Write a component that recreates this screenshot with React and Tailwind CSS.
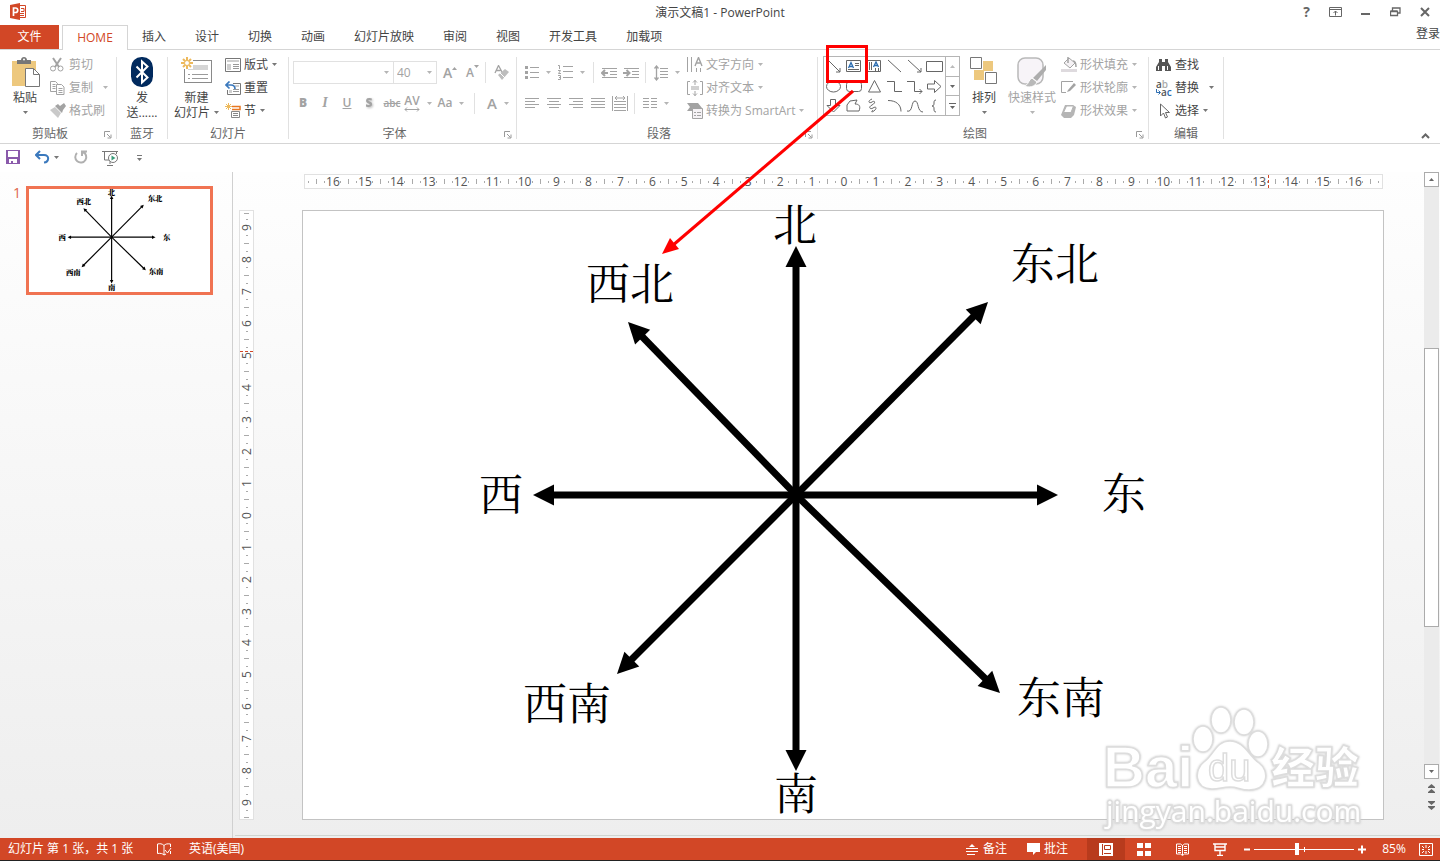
import clsx from 'clsx';

const UI_FONT = "font-['Open_Sans','Noto_Sans_CJK_SC',sans-serif]";

const Icon = ({ w = 16, h = 16, className, children }) => (
  <svg
    width={w}
    height={h}
    viewBox={`0 0 ${w} ${h}`}
    fill="none"
    stroke="currentColor"
    className={clsx('shrink-0', className)}
    aria-hidden="true"
  >
    {children}
  </svg>
);

const Caret = ({ className }) => (
  <Icon w={5} h={3} className={className}>
    <path d="M0 0h5L2.500 3z" fill="currentColor" stroke="none" />
  </Icon>
);

const Sep = () => <div className="w-px shrink-0 my-1 bg-[#e1e1e1]" />;

const SmallSep = () => <span className="w-px h-[21px] shrink-0 bg-[#e1e1e1]" />;

const Group = ({ title, launcher, className, children }) => (
  <>
    <section className={clsx('shrink-0 flex flex-col', className)} aria-label={title}>
      <div className="h-[69px] flex">{children}</div>
      <div className="h-[22px] pt-[3px] flex items-center text-[#666666]">
        <span className="flex-1 text-center">{title}</span>
        {launcher && (
          <button className="w-4 pt-0.5 flex justify-center text-[#9a9a9a]" aria-label={`${title} 设置`}>
            <Icon w={8} h={8}>
              <path d="M.5 6V.5H6M3 3l3.500 3.500M7 3.500V7H3.500" />
            </Icon>
          </button>
        )}
      </div>
    </section>
    <Sep />
  </>
);

const BigButton = ({ icon, lines, caret, disabled, className }) => (
  <button
    className={clsx(
      'shrink-0 pt-1 flex flex-col items-center leading-[15px] whitespace-nowrap',
      disabled ? 'text-[#a3a3a3]' : 'text-[#444444]',
      className
    )}
  >
    <span className="h-[33px]">{icon}</span>
    <span>{lines[0]}</span>
    <span className="h-[15px] flex items-center gap-1">
      {lines[1]}
      {caret && <Caret className={disabled ? 'text-[#b5b5b5]' : 'text-[#777777]'} />}
    </span>
  </button>
);

const RowButton = ({ icon, label, caret, disabled, className }) => (
  <button
    className={clsx(
      'h-[23px] flex items-center whitespace-nowrap',
      disabled ? 'text-[#a3a3a3]' : 'text-[#444444]',
      className
    )}
  >
    <span className="w-[19px] shrink-0 text-left">{icon}</span>
    <span>{label}</span>
    {caret && (
      <Caret className={clsx(caret === 'far' ? 'ml-2.5' : 'ml-1', disabled ? 'text-[#b5b5b5]' : 'text-[#777777]')} />
    )}
  </button>
);

/* ---------- ribbon icons ---------- */

const PasteIcon = () => (
  <Icon w={30} h={31}>
    <path d="M2 4h24v25H2z" fill="#edc87e" stroke="none" />
    <path d="M7 3h4c0-4 6-4 6 0h4v4H7z" fill="#777" stroke="none" />
    <circle cx="14" cy="2.500" r="1" fill="#fff" stroke="none" />
    <path d="M15.500 11.500h8l6 6v12h-14z" fill="#fff" stroke="#777" />
    <path d="M23.500 11.500v6h6" stroke="#777" />
  </Icon>
);

const CutIcon = () => (
  <Icon>
    <path d="M3 1l6 9M11 1L5 10" strokeWidth="2" />
    <circle cx="3" cy="11.500" r="2.500" />
    <circle cx="10.500" cy="11.500" r="2.500" />
  </Icon>
);

const CopyIcon = () => (
  <Icon>
    <path d="M6.500 11.500h-6v-10h5l2 2v1M2.500 4.500h3M2.500 6.500h3M2.500 8.500h3" />
    <path d="M6.500 4.500h5l2.500 2.500v7.500H6.500zM8.500 8.500h4M8.500 10.500h4M8.500 12.500h4" />
  </Icon>
);

const BrushIcon = () => (
  <Icon>
    <path d="M0 7l5-3 6 6-3 5z" fill="#c9c9c9" stroke="none" />
    <path d="M5 3l7 7 1-3 3-4-2-3-4 3-2-2z" fill="currentColor" stroke="none" />
  </Icon>
);

const BluetoothIcon = () => (
  <Icon w={22} h={31}>
    <rect x="0" y="0" width="22" height="30" rx="10.500" fill="#012a5e" stroke="none" />
    <path d="M5.500 9.500l11 11-5.500 5V4.500l5.500 5-11 11" stroke="#fff" strokeWidth="2" />
  </Icon>
);

const NewSlideIcon = () => (
  <Icon w={31} h={28}>
    <rect x="3.500" y="3.500" width="27" height="22" fill="#fff" stroke="#8a8a8a" />
    <path d="M7 8h20v5H7z" fill="#d5d5d5" stroke="none" />
    <path d="M7 17.500h2M11 17.500h16M7 21.500h2M11 21.500h16" stroke="#9a9a9a" />
    <path d="M0 0h12v12H0z" fill="#fff" stroke="none" />
    <path d="M6 0v12M0 6h12M2 2l8 8M10 2l-8 8" stroke="#edb95c" strokeWidth="2" />
    <circle cx="6" cy="6" r="2.500" fill="#fff" stroke="#edb95c" />
  </Icon>
);

const LayoutIcon = () => (
  <Icon h={14}>
    <path d="M.5.5h15v13H.5z" stroke="#777" />
    <path d="M2 2h12v2H2zM2 6h4v6H2z" fill="#cfcfcf" stroke="none" />
    <path d="M8 6.500h6M8 8.500h6M8 10.500h6" stroke="#999" />
  </Icon>
);

const ResetIcon = () => (
  <Icon h={14}>
    <path d="M8 2.500h7.500v11h-13V9" stroke="#777" />
    <path d="M10 4h4v2h-4zM4 9h3v3H4z" fill="#cfcfcf" stroke="none" />
    <path d="M8 8.500h6M8 10.500h6" stroke="#999" />
    <path d="M1 4h5c3 0 4 1 4 4M4.500 .5L1 4l3.500 3.500" stroke="#3b79bd" strokeWidth="1.700" />
  </Icon>
);

const SectionIcon = () => (
  <Icon h={16}>
    <path d="M3.500 0v7M0 3.500h7M1 1l5 5M6 1L1 6" stroke="#edb95c" />
    <path d="M7 3.500h8v3H7" stroke="#e87722" strokeWidth="1.500" />
    <path d="M6.500 8.500h8v6h-8zM8 10.500h5M8 12.500h5" stroke="#888" />
  </Icon>
);

const LinesIcon = ({ rows }) => (
  <Icon w={14} h={12}>
    {rows.map(([a, b], i) => (
      <path key={i} d={`M${a} ${i * 3 + 1}.5H${b}`} />
    ))}
  </Icon>
);

const BulletsIcon = () => (
  <Icon w={14} h={14}>
    <path d="M0 0h3v3H0zM0 5h3v3H0zM0 10h3v3H0z" fill="currentColor" stroke="none" />
    <path d="M5 1.500h9M5 6.500h9M5 11.500h9" />
  </Icon>
);

const NumbersIcon = () => (
  <Icon w={15} h={15}>
    <path d="M0 .5h1.500V4M0 5.500h2.500L.5 8.500H3M0 10.500h2.500v4H0M1 12.500h1.500" />
    <path d="M5 1.500h10M5 6.500h10M5 12.500h10" />
  </Icon>
);

const IndentIcon = ({ right }) => (
  <Icon w={16} h={12}>
    <path d="M1 1.500h15M9 4.500h7M9 7.500h7M1 10.500h15" />
    <path d={right ? 'M0 6h6M3.500 3L6.500 6l-3 3' : 'M1 6h6M4 3L1 6l3 3'} strokeWidth="2" />
  </Icon>
);

const SpacingIcon = () => (
  <Icon w={14} h={16}>
    <path d="M2.500 1v14M.5 3.500l2-2.500 2 2.500M.5 12.500l2 2.500 2-2.500" strokeWidth="1.300" />
    <path d="M6 3.500h8M6 6.500h8M6 9.500h8M6 12.500h8" />
  </Icon>
);

const DistributeIcon = () => (
  <Icon w={16} h={16}>
    <path d="M.5 1v15M15.500 1v15M2 6.500h12M2 9.500h12M2 12.500h12M2 15.500h12" />
    <path d="M3 3h10M5 1L3 3l2 2M11 1l2 2-2 2" />
  </Icon>
);

const ColumnsIcon = () => (
  <Icon w={14} h={12}>
    <path d="M0 1.500h6M0 4.500h6M0 7.500h6M0 10.500h6M8 1.500h6M8 4.500h6M8 7.500h6M8 10.500h6" />
  </Icon>
);

const TextDirIcon = () => (
  <Icon>
    <path d="M.5 0v15M4.500 0v15M9.500 11v4M13.500 11v4" />
    <path d="M8 9l3.500-8.500L15 9M9.500 6h4" strokeWidth="1.400" />
  </Icon>
);

const AlignTextIcon = () => (
  <Icon>
    <path d="M3 1.500H.5v13H3M13 1.500h2.500v13H13" />
    <path d="M8 0v5M6 2.500L8 .5l2 2M8 11v5M6 13.500l2 2 2-2M4 7h8M4 9h8" />
  </Icon>
);

const SmartArtIcon = () => (
  <Icon>
    <path d="M0 0h11l4 5H6v3H0l3-4z" fill="currentColor" stroke="none" />
    <path d="M5.500 5.500h10v10h-10z" fill="#f5f2f5" />
    <path d="M7 9.500h2M10 9.500h4M7 12.500h2M10 12.500h4" />
  </Icon>
);

const ArrangeIcon = () => (
  <Icon w={28} h={28}>
    <path d="M4 13h10v10H4zM13 4h10v10H13z" fill="#edc87e" stroke="none" />
    <path d="M.5.500h11v11H.5zM15.500 15.500h11v11h-11z" fill="#fff" stroke="#777" />
  </Icon>
);

const QuickStyleIcon = () => (
  <Icon w={30} h={31}>
    <rect x="1" y="1" width="25" height="26" rx="7" fill="#f7f4f8" stroke="#b9b9b9" strokeWidth="1.500" />
    <path d="M29 8v5L20 24l-4-3z" fill="#adadad" stroke="none" />
    <path d="M15 21l5 4c-2 5-8 6-13 4 5-1 4-6 8-8z" fill="#b9b9b9" stroke="#fff" />
  </Icon>
);

const FillIcon = () => (
  <Icon>
    <path d="M3 6l5-5 6 5-5 5z" fill="#f5f2f5" />
    <path d="M7 0v6M12 4c3 0 3 3 3 6" strokeWidth="1.500" />
    <path d="M0 12h16v3H0z" fill="#dedade" stroke="none" />
  </Icon>
);

const OutlineIcon = () => (
  <Icon>
    <path d="M12 1.500H.5v11H5" />
    <path d="M7 10l6-7 2 2-6 6-3 1z" fill="currentColor" stroke="none" />
  </Icon>
);

const EffectIcon = () => (
  <Icon>
    <path d="M4 2h8l3 2-2 8-3 3H3l-3-3z" fill="#b5b5b5" stroke="none" />
    <path d="M5.500 3h7L10 9.500H2.500z" fill="#fff" stroke="#b5b5b5" />
  </Icon>
);

const FindIcon = () => (
  <Icon h={14}>
    <path d="M3 1h3v3h3V1h3v3l3 5v4H9V8H6v5H0V9l3-5z" fill="#555" stroke="none" />
    <path d="M2.500 8v4M11.500 8v4" stroke="#fff" />
  </Icon>
);

const ReplaceIcon = () => (
  <span className="block h-4 w-[17px] text-[10px] leading-[8px] font-semibold text-[#555555]">
    <span className="block">
      a<span className="text-[#aaaaaa]">b</span>
    </span>
    <span className="flex">
      <Icon w={5} h={6} className="mt-px text-[#2b6cb0]">
        <path d="M.5 0v3.500H4M2.500 1.500l2 2-2 2" />
      </Icon>
      a<span className="text-[#2b6cb0]">c</span>
    </span>
  </span>
);

const SelectIcon = () => (
  <Icon>
    <path d="M4.500 1v12l3-3 2 5 2-1-2-4.500h4z" stroke="#666" />
  </Icon>
);

const ToolButton = ({ label, className, caret, children }) => (
  <button
    className={clsx('h-[22px] shrink-0 flex items-center justify-center text-[#a3a3a3]', className)}
    aria-label={label}
  >
    {children}
    {caret && <Caret className="ml-[7px] text-[#b5b5b5]" />}
  </button>
);

/* ---------- shape gallery ---------- */

const GALLERY = [
  ['直线箭头', <path d="M2 1l12 12M14 9v4h-4" />],
  [
    '文本框',
    <>
      <path d="M.5 1.500h14v11H.5z" />
      <path d="M2.500 9L5 3.500 7.500 9M3.500 7.500h3" stroke="#2b6cb0" strokeWidth="1.300" />
      <path d="M9 4.500h4M9 6.500h4M2 10.500h11" />
    </>,
  ],
  [
    '竖排文本框',
    <>
      <path d="M.5 1.500h14v11H.5z" />
      <path d="M7.500 8L10 3l2.500 5M8.500 6.500h3" stroke="#2b6cb0" strokeWidth="1.300" />
      <path d="M3.500 3v8M5.500 3v8M9.500 9v3M12.500 9v3" />
    </>,
  ],
  ['直线', <path d="M1 1l13 12" />],
  ['箭头', <path d="M1 1l13 12M14 9v4h-4" />],
  ['矩形', <path d="M-.5 2.500h16v10h-16z" />],
  ['椭圆', <ellipse cx="7.500" cy="8.500" rx="7" ry="5.500" />],
  ['圆角矩形', <rect x=".5" y="3.500" width="15" height="10" rx="3" />],
  ['三角形', <path d="M8.500 2.500l6 11.500h-12z" />],
  ['肘形连接符', <path d="M0 3.500h7.500v10H15" />],
  ['肘形箭头', <path d="M0 3.500h7.500v10H15M12.500 11l2.500 2.500-2.500 2.500" />],
  ['右箭头', <path d="M.5 6h7V2.500l6.500 6-6.500 6V11h-7z" />],
  ['下箭头', <path d="M4.500 2.500h5v6h4.500l-6.500 6.500L1 8.500h3.500z" />],
  ['任意多边形', <path d="M4 4l7-1-2 4c4 0 6 2 4 7H1V8z" />],
  ['自由曲线', <path d="M6 2c-5 2-3 5 0 3s4 1 0 3-2 5 1 3 4 0 2 2-5 3-2 0" />],
  ['弧形', <path d="M1 3.500c8 0 13 4 13 11" />],
  ['曲线', <path d="M0 14c6 2 4-10 8-10s2 11 8 11" />],
  ['左大括号', <path d="M9 3c-4 0 0 6-4 6 4 0 0 6 4 6" />],
];

const ShapeGallery = () => (
  <div className="ml-[5px] mt-[3px] w-[137px] h-[60px] shrink-0 flex border border-[#b5b5b5] bg-white">
    <div className="flex-1 grid grid-cols-6 grid-rows-3">
      {GALLERY.map(([name, shape]) => (
        <button key={name} className="flex items-center justify-center text-[#666666]" aria-label={name}>
          <Icon className="overflow-visible">{shape}</Icon>
        </button>
      ))}
    </div>
    <div className="w-[14px] flex flex-col border-l border-[#b5b5b5] divide-y divide-[#b5b5b5] text-[#666666]">
      <button className="flex-1 flex items-center justify-center text-[#bbbbbb]" aria-label="向上">
        <Caret className="rotate-180" />
      </button>
      <button className="flex-1 flex items-center justify-center" aria-label="向下">
        <Caret />
      </button>
      <button className="flex-1 flex flex-col gap-0.5 items-center justify-center" aria-label="更多">
        <span className="w-[7px] h-px bg-[#666666]" />
        <Caret />
      </button>
    </div>
  </div>
);

/* ---------- header ---------- */

const TABS = ['插入', '设计', '切换', '动画', '幻灯片放映', '审阅', '视图', '开发工具', '加载项'];

const TitleBar = () => (
  <header className="h-[25px] shrink-0 flex items-center text-[#444444]">
    <div className="flex-1 pb-0.5 pl-[10px]">
      <Icon w={17} h={17}>
        <path d="M8.500 2.500h7v12h-7z" fill="#fff" stroke="#d24726" />
        <path d="M11 5.500h3v3h-3M10 10.500h4M10 12.500h4" stroke="#d24726" />
        <path d="M0 2l10-2v17L0 15z" fill="#d24726" stroke="none" />
        <path d="M3.500 13V5h2c3 0 3 4.500 0 4.500h-2" stroke="#fff" strokeWidth="1.700" />
      </Icon>
    </div>
    <h1>演示文稿1 - PowerPoint</h1>
    <div className="flex-1 flex justify-end items-center gap-[19px] pb-0.5 pr-[10px] text-[#666666]">
      <button className="text-[14px] leading-[14px] font-bold" aria-label="帮助">?</button>
      <button aria-label="功能区显示选项">
        <Icon w={13} h={10}>
          <path d="M.5.500h12v9H.5zM1 2.500h11M6.500 8.500V4M4.500 6l2-2 2 2" />
        </Icon>
      </button>
      <button aria-label="最小化">
        <Icon w={10} h={10}>
          <path d="M0 7h9" strokeWidth="2" />
        </Icon>
      </button>
      <button aria-label="还原">
        <Icon w={11} h={10}>
          <path d="M2.500 4V1h7.500v5H8M.5 4.500H7.500v4H.5zM.5 4h7" strokeWidth="1.300" />
        </Icon>
      </button>
      <button aria-label="关闭">
        <Icon w={10} h={10}>
          <path d="M1 1l8 8M9 1L1 9" strokeWidth="2" />
        </Icon>
      </button>
    </div>
  </header>
);

const TabRow = () => (
  <nav className="h-[25px] shrink-0 flex border-b border-[#d5d5d5] text-[#444444]">
    <button className="w-[59px] bg-[#d24726] text-white">文件</button>
    <button className="ml-[3px] -mb-px w-[66px] border border-b-0 border-[#d5d5d5] bg-white text-[#d24726]">HOME</button>
    <div className="flex-1 ml-[14px] flex gap-[29px]">
      {TABS.map((tab) => (
        <button key={tab}>{tab}</button>
      ))}
    </div>
    <button className="-mt-1.5">登录</button>
  </nav>
);

const FontGroup = () => (
  <Group title="字体" launcher className="w-[227px]">
    <div className="flex-1 pt-2 pl-1 flex flex-col gap-2">
      <div className="h-[23px] flex items-center">
        <label className="w-[101px] h-full flex items-center border border-[#e1e1e1]">
          <input className="w-full min-w-0 outline-none" aria-label="字体" />
          <Caret className="mx-1 text-[#b5b5b5]" />
        </label>
        <label className="w-[43px] h-full flex items-center border border-l-0 border-[#e1e1e1]">
          <select
            className="appearance-none w-full min-w-0 pl-[3px] text-[#a3a3a3] outline-none"
            aria-label="字号"
            defaultValue="40"
          >
            <option>36</option>
            <option>40</option>
          </select>
          <Caret className="mx-1 text-[#b5b5b5]" />
        </label>
        <button className="ml-1.5 w-[15px] flex font-semibold text-[14px] text-[#a3a3a3]" aria-label="增大字号">
          A<Caret className="mt-0.5 rotate-180" />
        </button>
        <button className="ml-2 w-[15px] flex items-center font-semibold text-[#a3a3a3]" aria-label="减小字号">
          A<Caret className="mb-3" />
        </button>
        <span className="w-1" />
        <SmallSep />
        <ToolButton className="ml-2" label="清除所有格式">
          <Icon>
            <path d="M1 8L4.500 .5 8 7M2.500 5.500h4" strokeWidth="1.300" />
            <path d="M4 10l7-6 4 3-7 8z" fill="#bdbdbd" stroke="none" />
            <path d="M6 8l5 5" stroke="#fff" />
          </Icon>
        </ToolButton>
      </div>
      <div className="-ml-px flex items-center font-semibold">
        <ToolButton className="w-[22px]" label="加粗"><b>B</b></ToolButton>
        <ToolButton className="w-[22px]" label="倾斜">
          <i className="font-['Liberation_Serif',serif] text-[14px]">I</i>
        </ToolButton>
        <ToolButton className="w-[22px]" label="下划线"><u>U</u></ToolButton>
        <ToolButton className="w-[22px]" label="文字阴影">
          <b className="drop-shadow-[1px_1px_1px_#bbbbbb]">S</b>
        </ToolButton>
        <ToolButton className="w-[24px] text-[10px]" label="删除线"><s>abc</s></ToolButton>
        <ToolButton className="w-[28px]" label="字符间距" caret>
          <span className="flex flex-col items-center leading-[12px]">
            AV
            <Icon w={16} h={5}>
              <path d="M1 2.500h14M3 .5l-2 2 2 2M13 .5l2 2-2 2" />
            </Icon>
          </span>
        </ToolButton>
        <ToolButton className="w-[38px]" label="更改大小写" caret>Aa</ToolButton>
        <span className="w-1" />
        <SmallSep />
        <ToolButton className="ml-2 w-[30px] text-[15px]" label="字体颜色" caret>A</ToolButton>
      </div>
    </div>
  </Group>
);

const ParagraphGroup = () => (
  <Group title="段落" launcher className="w-[300px]">
    <div className="w-[170px] pt-2 pl-2 flex flex-col gap-2">
      <div className="h-[23px] flex items-center">
        <ToolButton label="项目符号" caret><BulletsIcon /></ToolButton>
        <ToolButton className="ml-[7px]" label="编号" caret><NumbersIcon /></ToolButton>
        <span className="w-2" />
        <SmallSep />
        <ToolButton className="ml-[7px]" label="减少缩进"><IndentIcon /></ToolButton>
        <ToolButton className="ml-1.5" label="增加缩进"><IndentIcon right /></ToolButton>
        <span className="w-1.5" />
        <SmallSep />
        <ToolButton className="ml-2" label="行距" caret><SpacingIcon /></ToolButton>
      </div>
      <div className="flex items-center">
        <ToolButton label="左对齐"><LinesIcon rows={[[0, 14], [0, 10], [0, 14], [0, 10]]} /></ToolButton>
        <ToolButton className="ml-2" label="居中"><LinesIcon rows={[[0, 14], [2, 12], [0, 14], [2, 12]]} /></ToolButton>
        <ToolButton className="ml-2" label="右对齐"><LinesIcon rows={[[0, 14], [4, 14], [0, 14], [4, 14]]} /></ToolButton>
        <ToolButton className="ml-2" label="两端对齐"><LinesIcon rows={[[0, 14], [0, 14], [0, 14], [0, 14]]} /></ToolButton>
        <ToolButton className="ml-[7px]" label="分散对齐"><DistributeIcon /></ToolButton>
        <span className="w-1.5" />
        <SmallSep />
        <ToolButton className="ml-2" label="分栏" caret><ColumnsIcon /></ToolButton>
      </div>
    </div>
    <div className="flex flex-col items-start">
      <RowButton icon={<TextDirIcon />} label="文字方向" caret disabled />
      <RowButton icon={<AlignTextIcon />} label="对齐文本" caret disabled />
      <RowButton icon={<SmartArtIcon />} label="转换为 SmartArt" caret disabled />
    </div>
  </Group>
);

const Ribbon = () => (
  <div className="h-[94px] shrink-0 pt-[3px] flex border-b border-[#d5d5d5] overflow-hidden">
    <Group title="剪贴板" launcher className="w-[116px]">
      <BigButton className="w-[50px]" icon={<PasteIcon />} lines={['粘贴']} caret />
      <div>
        <RowButton icon={<CutIcon />} label="剪切" disabled />
        <RowButton icon={<CopyIcon />} label="复制" caret="far" disabled />
        <RowButton icon={<BrushIcon />} label="格式刷" disabled />
      </div>
    </Group>
    <Group title="蓝牙" className="w-[50px]">
      <BigButton className="w-[50px]" icon={<BluetoothIcon />} lines={['发', '送......']} />
    </Group>
    <Group title="幻灯片" className="w-[120px]">
      <BigButton className="w-[57px]" icon={<NewSlideIcon />} lines={['新建', '幻灯片']} caret />
      <div>
        <RowButton icon={<LayoutIcon />} label="版式" caret />
        <RowButton icon={<ResetIcon />} label="重置" />
        <RowButton icon={<SectionIcon />} label="节" caret />
      </div>
    </Group>
    <FontGroup />
    <ParagraphGroup />
    <Group title="绘图" launcher className="w-[330px]">
      <ShapeGallery />
      <BigButton className="w-[48px]" icon={<ArrangeIcon />} lines={['排列']} caret />
      <BigButton className="w-[48px]" icon={<QuickStyleIcon />} lines={['快速样式']} caret disabled />
      <div className="ml-[5px]">
        <RowButton icon={<FillIcon />} label="形状填充" caret disabled />
        <RowButton icon={<OutlineIcon />} label="形状轮廓" caret disabled />
        <RowButton icon={<EffectIcon />} label="形状效果" caret disabled />
      </div>
    </Group>
    <Group title="编辑" className="w-[74px]">
      <div className="ml-[7px]">
        <RowButton icon={<FindIcon />} label="查找" />
        <RowButton icon={<ReplaceIcon />} label="替换" caret="far" />
        <RowButton icon={<SelectIcon />} label="选择" caret />
      </div>
    </Group>
    <div className="flex-1 flex items-end justify-end pr-[10px] pb-1">
      <button className="text-[#666666]" aria-label="折叠功能区">
        <Icon w={9} h={6}>
          <path d="M1 5l3.500-3.500L8 5" strokeWidth="2" />
        </Icon>
      </button>
    </div>
  </div>
);

const QuickAccess = () => (
  <div className="h-7 shrink-0 pl-1.5 flex items-center text-[#777777]">
    <button className="mb-0.5" aria-label="保存">
      <Icon w={14} h={14}>
        <path d="M0 0h14v14H0z" fill="#8a5aab" stroke="none" />
        <path d="M2 1h10v6H2zM3 9h8v4H7v-2H5v2H3z" fill="#fff" stroke="none" />
      </Icon>
    </button>
    <button className="ml-[15px] mb-0.5 flex items-center gap-1" aria-label="撤消">
      <Icon w={15} h={14} className="text-[#3b79bd]">
        <path d="M1 5h8c6 0 5 7 0 7.500M5 1L1 5l4 4" strokeWidth="2" />
      </Icon>
      <Caret />
    </button>
    <button className="ml-[15px] mb-0.5" aria-label="重复">
      <Icon w={14} h={14} className="text-[#b0b0b0]">
        <path d="M9 2a5.500 5.500 0 1 1-6 1M8 6V1.500h5" strokeWidth="2" />
      </Icon>
    </button>
    <button className="ml-[14px]" aria-label="从头开始放映">
      <Icon w={17} h={16}>
        <path d="M0 1.500h16M2.500 2v8H7M14.500 2v2M8 11v3M5 15.500h6" />
        <circle cx="11" cy="8" r="4.500" fill="#fff" />
        <path d="M9.500 5.500v5l4-2.500z" fill="#3b9c7a" stroke="none" />
      </Icon>
    </button>
    <button className="ml-[18px] flex flex-col items-center gap-0.5" aria-label="自定义快速访问工具栏">
      <span className="w-[5px] h-px bg-[#777777]" />
      <Caret />
    </button>
  </div>
);

/* ---------- slide ---------- */

const CENTER = [494, 285];

const TIPS = [
  [494, 36],
  [686, 92],
  [756, 285],
  [698, 483],
  [494, 561],
  [315, 464],
  [231, 285],
  [326, 112],
];

const LABELS = [
  ['北', 493, 15],
  ['东北', 753, 54],
  ['东', 822, 284],
  ['东南', 759, 488],
  ['南', 494, 584],
  ['西南', 265, 494],
  ['西', 199, 285],
  ['西北', 328, 74],
];

const Compass = ({ bold }) => (
  <svg viewBox="1 1 1080 608" className="w-full h-full overflow-visible" role="img" aria-label="方位图">
    {TIPS.map(([x, y]) => {
      const angle = (Math.atan2(y - CENTER[1], x - CENTER[0]) * 180) / Math.PI;
      const length = Math.hypot(x - CENTER[0], y - CENTER[1]);
      return (
        <g key={`${x}-${y}`} transform={`translate(${CENTER[0]} ${CENTER[1]}) rotate(${angle})`}>
          <path d={`M-2 0H${length - 16}`} stroke="#000" strokeWidth="7" />
          <path d={`M${length} 0l-21-10.500v21z`} />
        </g>
      );
    })}
    {LABELS.map(([text, x, y]) => (
      <text
        key={text}
        x={x}
        y={y + 16}
        textAnchor="middle"
        className={clsx(
          "text-[44px] font-['Liberation_Serif','Noto_Serif_CJK_SC','Noto_Sans_CJK_SC',serif]",
          bold ? 'font-black' : 'font-normal'
        )}
      >
        {text}
      </text>
    ))}
  </svg>
);

const rulerSlots = (quarters) => Array.from({ length: quarters * 2 + 1 }, (_, i) => i - quarters);

const HRuler = () => (
  <div className="relative ml-[71px] mr-[41px] mt-0.5 h-[15px] shrink-0 flex border border-[#e1e1e1] bg-white text-[#555555]">
    {rulerSlots(67).map((k) => (
      <span key={k} className="flex-1 basis-0 min-w-0 flex items-center justify-center leading-[13px]">
        {k % 4 === 0 ? (
          Math.abs(k / 4)
        ) : (
          <span className={clsx('w-px shrink-0 bg-[#aaaaaa]', k % 2 === 0 ? 'h-[5px]' : 'h-0.5')} />
        )}
      </span>
    ))}
    <span className="absolute inset-y-0 left-[893px] border-l border-dashed border-[#d24726] xl:left-[89.4%]" />
  </div>
);

const VRuler = () => (
  <div className="relative ml-1.5 w-[15px] shrink-0 flex flex-col border border-[#e1e1e1] bg-white text-[#555555]">
    {rulerSlots(38).map((k) => (
      <span
        key={k}
        className={clsx(
          'basis-0 min-h-0 flex items-center justify-center',
          Math.abs(k) === 38 ? 'grow-[0.6]' : 'grow'
        )}
      >
        {k % 4 === 0 ? (
          <span className="-rotate-90 leading-[13px]">{Math.abs(k / 4)}</span>
        ) : (
          <span className={clsx('h-px shrink-0 bg-[#aaaaaa]', k % 2 === 0 ? 'w-[5px]' : 'w-0.5')} />
        )}
      </span>
    ))}
    <span className="absolute inset-x-0 top-[23%] border-t border-dashed border-[#d24726]" />
  </div>
);

const DoubleArrow = ({ className }) => (
  <Icon w={7} h={9} className={className}>
    <path d="M3.500 0L7 3H0zM3.500 5L7 8H0z" fill="currentColor" stroke="none" />
    <path d="M0 3.500h7M0 8.500h7" />
  </Icon>
);

const ScrollBar = () => (
  <div className="w-4 shrink-0 flex flex-col items-start text-[#666666]">
    <button
      className="size-[15px] shrink-0 flex items-center justify-center border border-[#ababab] bg-white"
      aria-label="向上滚动"
    >
      <Caret className="rotate-180" />
    </button>
    <div className="w-[15px] flex-1 flex flex-col bg-[#ebebeb]">
      <div className="grow-[162] basis-0" />
      <div className="grow-[278] basis-0 border border-[#ababab] bg-white" />
      <div className="grow-[137] basis-0" />
    </div>
    <button
      className="size-[15px] shrink-0 flex items-center justify-center border border-[#ababab] bg-white"
      aria-label="向下滚动"
    >
      <Caret />
    </button>
    <button className="mt-[5px] ml-1" aria-label="上一张幻灯片">
      <DoubleArrow />
    </button>
    <button className="mt-2 mb-[25px] ml-1" aria-label="下一张幻灯片">
      <DoubleArrow className="rotate-180" />
    </button>
  </div>
);

const Workspace = () => (
  <main className="flex-1 min-h-0 flex bg-linear-to-b from-[#fefefe] to-[#eeeeee]">
    <aside className="w-[233px] shrink-0 pl-[13px] pt-[14px] flex items-start border-r border-[#d0d0d0]">
      <span className="w-[13px] text-[14px] leading-[14px] text-[#e0654a]">1</span>
      <button className="w-[187px] h-[109px] border-3 border-[#f07352] bg-white" aria-label="幻灯片 1">
        <Compass bold />
      </button>
    </aside>
    <div className="flex-1 min-w-0 flex flex-col">
      <div className="flex-1 min-h-0 flex">
        <div className="flex-1 min-w-0 flex flex-col">
          <HRuler />
          <div className="flex-1 min-h-0 mt-[21px] mb-[15px] flex">
            <VRuler />
            <div className="ml-12 mr-10 flex-1 min-w-0 border border-[#c3c3c3] bg-white">
              <Compass />
            </div>
          </div>
        </div>
        <ScrollBar />
      </div>
      <div className="ml-0.5 h-[3px] shrink-0 border-t border-[#d0d5d0]" />
    </div>
  </main>
);

/* ---------- status bar ---------- */

const StatusBar = () => (
  <footer className="h-[23px] shrink-0 flex items-center border-b border-[#222222] bg-[#d24726] text-white">
    <span className="w-[157px] pl-2">幻灯片 第 1 张，共 1 张</span>
    <button aria-label="拼写检查">
      <Icon w={15} h={13}>
        <path d="M7 2.500C5 .5 3 .5.5 1v9.500c3-.5 5 0 6.500 1.500zM7 2.500C8.500 1 10 .5 13.500 1v3M7 12l2-1M8 7l2.500 3L14 5M13.500 8v3" />
      </Icon>
    </button>
    <button className="ml-[17px]">英语(美国)</button>
    <div className="flex-1" />
    <button className="flex items-center gap-[5px]">
      <Icon w={12} h={12}>
        <path d="M3 4l3-3 3 3z" fill="#fff" stroke="none" />
        <path d="M0 5.500h12M0 8.500h12M1 11.500h8" />
      </Icon>
      备注
    </button>
    <button className="ml-5 flex items-center gap-1">
      <Icon w={13} h={12}>
        <path d="M0 0h13v9H9l-3 3V9H0z" fill="#fff" stroke="none" />
      </Icon>
      批注
    </button>
    <button
      className="ml-[19px] w-[38px] h-full flex items-center justify-center bg-[#b83b1d]"
      aria-label="普通视图"
    >
      <Icon w={14} h={13}>
        <path d="M0 0h14v13H0z" fill="#fff" stroke="none" />
        <path d="M3.500 1v11" stroke="#b83b1d" />
        <path d="M5.500 2.500h6v4h-6zM5 10.500h7" stroke="#b83b1d" />
      </Icon>
    </button>
    <button className="w-[38px] flex justify-center" aria-label="幻灯片浏览">
      <Icon w={14} h={13}>
        <path d="M0 0h6v5H0zM8 0h6v5H8zM0 8h6v5H0zM8 8h6v5H8z" fill="#fff" stroke="none" />
      </Icon>
    </button>
    <button className="w-[38px] flex justify-center" aria-label="阅读视图">
      <Icon w={13} h={13}>
        <path d="M6.500 2.500l-2-1.500H.5v10h4l2 1.500 2-1.500h4V1h-4zM6.500 2v10M2 3.500h3M2 5.500h3M2 7.500h3M2 9.500h3M8 3.500h3M8 5.500h3M8 7.500h3M8 9.500h3" />
      </Icon>
    </button>
    <button className="w-[38px] flex justify-center" aria-label="幻灯片放映">
      <Icon w={14} h={13}>
        <path d="M0 1h14M2 1v6.500h10V1M2 4h10M7 8v4M4 12.500h6" strokeWidth="1.400" />
      </Icon>
    </button>
    <button className="ml-1" aria-label="缩小">
      <Icon w={8} h={9}>
        <path d="M1 4.500h6" strokeWidth="2" />
      </Icon>
    </button>
    <div className="relative w-[100px] ml-[3px] flex items-center">
      <input
        type="range"
        min="0"
        max="100"
        defaultValue="43"
        aria-label="缩放"
        className="w-full h-3 appearance-none bg-transparent [&::-webkit-slider-runnable-track]:h-px [&::-webkit-slider-runnable-track]:bg-white [&::-webkit-slider-thumb]:appearance-none [&::-webkit-slider-thumb]:w-1 [&::-webkit-slider-thumb]:h-3 [&::-webkit-slider-thumb]:-mt-1.5 [&::-webkit-slider-thumb]:bg-white"
      />
      <span className="absolute left-1/2 w-px h-[5px] bg-white" />
    </div>
    <button className="ml-1" aria-label="放大">
      <Icon w={8} h={9}>
        <path d="M0 4.500h8M4 .5v8" strokeWidth="2" />
      </Icon>
    </button>
    <button className="ml-[15px] w-[26px]">85%</button>
    <button className="ml-3 mr-[7px]" aria-label="适应窗口">
      <Icon w={14} h={13}>
        <path d="M.5.500h13v12H.5zM7 2v3M7 8v3M3 6.500h2M9 6.500h2M3 3l2 2M11 3L9 5M3 10l2-2M11 10L9 8" />
      </Icon>
    </button>
  </footer>
);

/* ---------- overlays ---------- */

const Callout = () => (
  <svg className="absolute left-0 top-0 pointer-events-none" width="900" height="270" fill="none" stroke="#f00">
    <rect x="827.500" y="46.500" width="39" height="35" strokeWidth="3" />
    <path d="M853 91L672 246" strokeWidth="3" />
    <path d="M662 254l8-16 9 11z" fill="#f00" stroke="none" />
  </svg>
);

const Watermark = () => (
  <svg
    className="absolute right-[70px] bottom-[30px] pointer-events-none drop-shadow-[0_0_1px_#cccccc]"
    width="270"
    height="130"
    fill="#fff"
    stroke="#dddddd"
    strokeWidth="1.500"
  >
    <text x="3" y="86" className="text-[58px] font-bold font-['Liberation_Sans',sans-serif]">Bai</text>
    <ellipse cx="103" cy="38" rx="10" ry="13" />
    <ellipse cx="121" cy="19" rx="10" ry="13" />
    <ellipse cx="144" cy="21" rx="10" ry="13" />
    <ellipse cx="158" cy="43" rx="10" ry="13" />
    <path d="M130 40c-14 0-16 14-26 21s-10 27 8 27c8 0 10-2 18-2s10 3 19 3c19 0 21-19 10-27-10-7-15-22-29-22z" />
    <text x="108" y="80" className="text-[38px] font-['Liberation_Sans',sans-serif]">du</text>
    <text x="171" y="83" className="text-[44px] font-black font-['Noto_Sans_CJK_SC',sans-serif]">经验</text>
    <text
      x="6"
      y="121"
      strokeWidth="3"
      className="text-[30px] [paint-order:stroke] font-['Open_Sans',sans-serif]"
    >
      jingyan.baidu.com
    </text>
  </svg>
);

export default function App() {
  return (
    <div className={clsx('relative h-screen flex flex-col overflow-hidden bg-white text-[12px] leading-4', UI_FONT)}>
      <TitleBar />
      <TabRow />
      <Ribbon />
      <QuickAccess />
      <Workspace />
      <StatusBar />
      <Callout />
      <Watermark />
    </div>
  );
}
